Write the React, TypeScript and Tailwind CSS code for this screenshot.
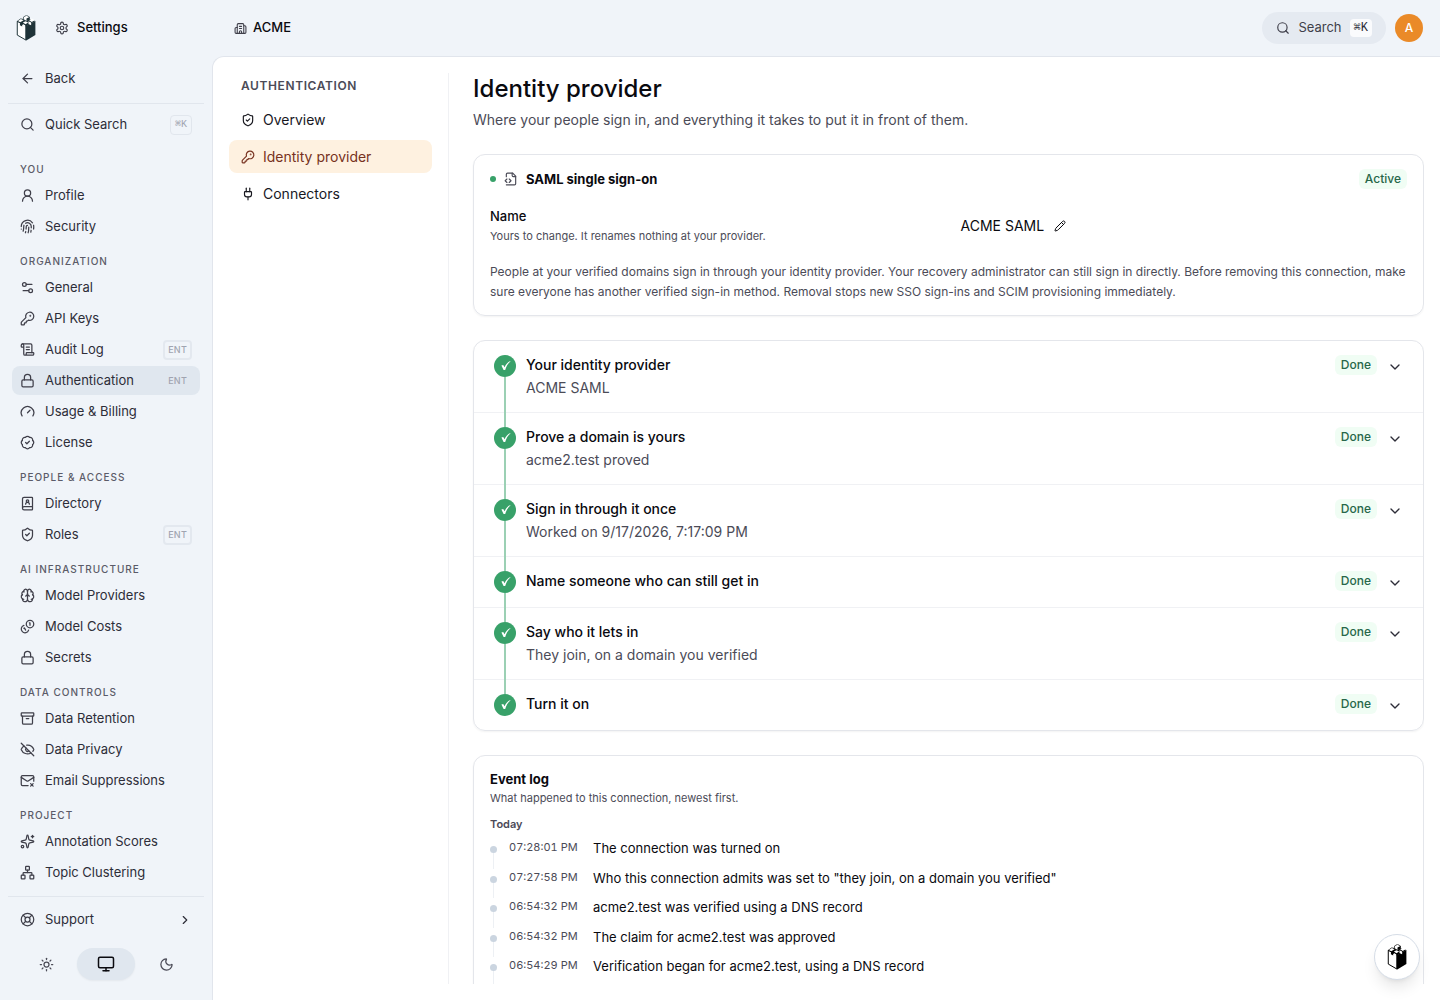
import { clsx } from "clsx";
import {
  Archive,
  ArrowLeft,
  BadgeCheck,
  BookUser,
  Brain,
  Building2,
  ChevronDown,
  ChevronRight,
  EyeOff,
  Fingerprint,
  Gauge,
  KeyRound,
  LifeBuoy,
  Lock,
  MailX,
  Monitor,
  Moon,
  Network,
  Pencil,
  Plug,
  ScrollText,
  Search,
  Settings2,
  ShieldCheck,
  Sparkles,
  Sun,
  UserRound,
} from "lucide-react";
import type { ComponentType, ReactNode } from "react";

interface IconProps {
  size?: number | string;
  className?: string;
}

interface NavItem {
  label: string;
  icon: ComponentType<IconProps>;
  ent?: boolean;
  active?: boolean;
}

interface NavSection {
  title: string;
  items: NavItem[];
}

interface Step {
  title: string;
  detail?: string;
}

function StrokeIcon({
  size = 24,
  className,
  children,
}: IconProps & { children: ReactNode }) {
  return (
    <svg
      width={size}
      height={size}
      viewBox="0 0 24 24"
      fill="none"
      stroke="currentColor"
      strokeWidth="2"
      strokeLinecap="round"
      strokeLinejoin="round"
      className={className}
      aria-hidden="true"
    >
      {children}
    </svg>
  );
}

function GearIcon(props: IconProps) {
  return (
    <StrokeIcon {...props}>
      <path d="M12.22 2h-.44a2 2 0 0 0-2 2v.18a2 2 0 0 1-1 1.73l-.43.25a2 2 0 0 1-2 0l-.15-.08a2 2 0 0 0-2.73.73l-.22.38a2 2 0 0 0 .73 2.73l.15.1a2 2 0 0 1 1 1.72v.51a2 2 0 0 1-1 1.74l-.15.09a2 2 0 0 0-.73 2.73l.22.38a2 2 0 0 0 2.73.73l.15-.08a2 2 0 0 1 2 0l.43.25a2 2 0 0 1 1 1.73V20a2 2 0 0 0 2 2h.44a2 2 0 0 0 2-2v-.18a2 2 0 0 1 1-1.73l.43-.25a2 2 0 0 1 2 0l.15.08a2 2 0 0 0 2.73-.73l.22-.39a2 2 0 0 0-.73-2.73l-.15-.08a2 2 0 0 1-1-1.74v-.5a2 2 0 0 1 1-1.74l.15-.09a2 2 0 0 0 .73-2.73l-.22-.38a2 2 0 0 0-2.73-.73l-.15.08a2 2 0 0 1-2 0l-.43-.25a2 2 0 0 1-1-1.73V4a2 2 0 0 0-2-2z" />
      <circle cx="12" cy="12" r="3" />
    </StrokeIcon>
  );
}

function CoinsIcon(props: IconProps) {
  return (
    <StrokeIcon {...props}>
      <path d="M13.744 17.736a6 6 0 1 1-7.48-7.48" />
      <path d="M15 6h1v4" />
      <path d="m6.134 14.768.866-.5 2 3.464" />
      <circle cx="16" cy="8" r="6" />
    </StrokeIcon>
  );
}

function FileCodeIcon(props: IconProps) {
  return (
    <StrokeIcon {...props}>
      <path d="M4 22h14a2 2 0 0 0 2-2V7l-5-5H6a2 2 0 0 0-2 2v4" />
      <path d="M14 2v4a2 2 0 0 0 2 2h4" />
      <path d="m5 12-3 3 3 3" />
      <path d="m9 18 3-3-3-3" />
    </StrokeIcon>
  );
}

const sections: NavSection[] = [
  {
    title: "You",
    items: [
      { label: "Profile", icon: UserRound },
      { label: "Security", icon: Fingerprint },
    ],
  },
  {
    title: "Organization",
    items: [
      { label: "General", icon: Settings2 },
      { label: "API Keys", icon: KeyRound },
      { label: "Audit Log", icon: ScrollText, ent: true },
      { label: "Authentication", icon: Lock, ent: true, active: true },
      { label: "Usage & Billing", icon: Gauge },
      { label: "License", icon: BadgeCheck },
    ],
  },
  {
    title: "People & Access",
    items: [
      { label: "Directory", icon: BookUser },
      { label: "Roles", icon: ShieldCheck, ent: true },
    ],
  },
  {
    title: "AI Infrastructure",
    items: [
      { label: "Model Providers", icon: Brain },
      { label: "Model Costs", icon: CoinsIcon },
      { label: "Secrets", icon: Lock },
    ],
  },
  {
    title: "Data Controls",
    items: [
      { label: "Data Retention", icon: Archive },
      { label: "Data Privacy", icon: EyeOff },
      { label: "Email Suppressions", icon: MailX },
    ],
  },
  {
    title: "Project",
    items: [
      { label: "Annotation Scores", icon: Sparkles },
      { label: "Topic Clustering", icon: Network },
    ],
  },
];

const authPages: NavItem[] = [
  { label: "Overview", icon: ShieldCheck },
  { label: "Identity provider", icon: KeyRound, active: true },
  { label: "Connectors", icon: Plug },
];

const steps: Step[] = [
  { title: "Your identity provider", detail: "ACME SAML" },
  { title: "Prove a domain is yours", detail: "acme2.test proved" },
  {
    title: "Sign in through it once",
    detail: "Worked on 9/17/2026, 7:17:09 PM",
  },
  { title: "Name someone who can still get in" },
  { title: "Say who it lets in", detail: "They join, on a domain you verified" },
  { title: "Turn it on" },
];

const events = [
  { time: "07:28:01 PM", text: "The connection was turned on" },
  {
    time: "07:27:58 PM",
    text: 'Who this connection admits was set to "they join, on a domain you verified"',
  },
  { time: "06:54:32 PM", text: "acme2.test was verified using a DNS record" },
  { time: "06:54:32 PM", text: "The claim for acme2.test was approved" },
  {
    time: "06:54:29 PM",
    text: "Verification began for acme2.test, using a DNS record",
  },
];

function Logo({ className }: { className?: string }) {
  return (
    <svg viewBox="0 0 57 79" className={className} aria-hidden="true">
      <path
        d="M2 19 L28 33 V76 L2 61 Z"
        fill="#fff"
        stroke="currentColor"
        strokeWidth="3"
        strokeLinejoin="round"
      />
      <path d="M28 34 L57 18 V61 L28 78 Z" fill="currentColor" />
      <path d="M1 19 L12 11 L22 12 L40 12 L57 18 L28 36 Z" fill="currentColor" />
      <path d="M4 18 L13 12 L21 16 L11 22 Z" fill="#fff" />
      <path
        d="M21 6 L30 1 L39 6 V14 L30 19 L21 14 Z"
        fill="#fff"
        stroke="currentColor"
        strokeWidth="2"
        strokeLinejoin="round"
      />
      <path d="M30 11 L39 6 V14 L30 19 Z" fill="currentColor" />
      <path d="M38 16 L46 11 L55 16 L46 21 Z" fill="#fff" />
      <path d="M36 19 L44 23 V31 L36 27 Z" fill="#fff" />
      <path d="M19 23 L27 19 L35 23 L27 28 Z" fill="#fff" />
      <path d="M10 23 L17 27 V35 L10 31 Z" fill="currentColor" />
      <path d="M19 27 L26 31 V36 L19 33 Z" fill="#fff" />
    </svg>
  );
}

function Header() {
  return (
    <header className="flex h-14 shrink-0 items-center pr-[17px]">
      <div className="flex w-[212px] shrink-0 items-center pl-4">
        <Logo className="h-[26px] w-5 text-[#1f3338]" />
        <h2 className="ml-[19px] flex items-center gap-2 text-[13px] font-medium">
          <GearIcon size={14} className="text-[#3f3f4a]" />
          Settings
        </h2>
      </div>
      <div className="flex flex-1 items-center gap-1.5 pl-[22px] text-[13px] font-medium">
        <Building2 size={13} className="text-[#3f3f4a]" />
        ACME
      </div>
      <button className="flex h-8 items-center gap-2 rounded-full bg-[#e5eaf1] px-3.5 text-[13px] text-[#3f3f4a]">
        <Search size={14} />
        Search
        <kbd className="rounded bg-[#fafbfd] px-1 font-['Liberation_Mono','DejaVu_Sans_Mono',monospace] text-xs leading-[18px] text-[#2b2b35]">
          ⌘K
        </kbd>
      </button>
      <button
        aria-label="Account"
        className="ml-[9px] size-7 rounded-full bg-[#ea8a28] text-xs font-medium text-white"
      >
        A
      </button>
    </header>
  );
}

function SidebarLink({ label, icon: Icon, ent, active }: NavItem) {
  return (
    <a
      href="#"
      className={clsx(
        "flex h-[29px] items-center gap-2.5 rounded-lg px-2 text-[13px] text-[#2d2d38]",
        active && "bg-[#e0e7ef]"
      )}
    >
      <Icon size={15} className="text-[#3f3f4a]" />
      <span className="flex-1">{label}</span>
      {ent && (
        <span
          className={clsx(
            "rounded border-2 px-[3px] text-[9px] leading-4 font-medium tracking-wide text-[#a0a4b0]",
            active ? "border-transparent" : "border-[#e3e8ef]"
          )}
        >
          ENT
        </span>
      )}
    </a>
  );
}

function Sidebar() {
  return (
    <aside className="flex w-[212px] shrink-0 flex-col">
      <div className="px-3 pt-2 pb-2.5">
        <SidebarLink label="Back" icon={ArrowLeft} />
      </div>
      <div className="mx-2 border-t border-[#e1e6ed]" />
      <div className="px-3 pt-1.5">
        <button className="flex h-[29px] w-full items-center gap-2.5 px-2 text-left text-[13px] text-[#2d2d38]">
          <Search size={15} className="text-[#3f3f4a]" />
          <span className="flex-1">Quick Search</span>
          <kbd className="rounded border border-[#e1e6ed] px-1 font-['Liberation_Mono','DejaVu_Sans_Mono',monospace] text-[10px] leading-[18px] text-[#a0a4b0]">
            ⌘K
          </kbd>
        </button>
      </div>
      <nav className="flex min-h-0 flex-1 flex-col gap-3 overflow-hidden px-3 pt-[22px]">
        {sections.map((section) => (
          <div key={section.title}>
            <h3 className="mb-1 px-2 text-[10px] leading-4 font-medium tracking-widest text-[#5b5b68] uppercase">
              {section.title}
            </h3>
            <div className="flex flex-col gap-0.5">
              {section.items.map((item) => (
                <SidebarLink key={item.label} {...item} />
              ))}
            </div>
          </div>
        ))}
      </nav>
      <div className="mx-2 border-t border-[#e1e6ed]" />
      <div className="px-3 pt-2 pb-5">
        <button className="flex h-[29px] w-full items-center gap-2.5 px-2 text-left text-[13px] text-[#2d2d38]">
          <LifeBuoy size={15} className="text-[#3f3f4a]" />
          <span className="flex-1">Support</span>
          <ChevronRight size={14} />
        </button>
        <div className="mt-3.5 flex justify-center gap-0.5 text-[#4b4b57]">
          <button
            aria-label="Light theme"
            className="flex h-8 w-[58px] items-center justify-center"
          >
            <Sun size={15} />
          </button>
          <button
            aria-label="System theme"
            className="flex h-8 w-[58px] items-center justify-center rounded-full bg-[#e0e7ef] text-[#0a0a0f] shadow-xs"
          >
            <Monitor size={18} />
          </button>
          <button
            aria-label="Dark theme"
            className="flex h-8 w-[58px] items-center justify-center"
          >
            <Moon size={15} />
          </button>
        </div>
      </div>
    </aside>
  );
}

function AuthNav() {
  return (
    <nav className="w-[220px] shrink-0 border-r border-[#f0f1f4] pr-4">
      <h3 className="mb-2 px-3 pt-1 text-xs leading-[18px] font-semibold tracking-wider text-[#4b4b57] uppercase">
        Authentication
      </h3>
      <div className="flex flex-col gap-1">
        {authPages.map(({ label, icon: Icon, active }) => (
          <a
            key={label}
            href="#"
            className={clsx(
              "flex h-[33px] items-center gap-2 rounded-lg px-3 text-sm",
              active ? "bg-[#fef1e0] text-[#773220]" : "text-[#18181f]"
            )}
          >
            <Icon size={14} />
            {label}
          </a>
        ))}
      </div>
    </nav>
  );
}

function Badge({ children }: { children: string }) {
  return (
    <span className="rounded-md bg-[#f0fdf4] px-1.5 text-xs leading-5 font-medium text-[#276749]">
      {children}
    </span>
  );
}

function ConnectionCard() {
  return (
    <section className="rounded-xl border border-[#e4e6eb] px-4 pt-3.5 pb-[13px] shadow-xs">
      <div className="flex items-center">
        <span className="size-1.5 rounded-full bg-[#38a169]" />
        <FileCodeIcon size={14} className="ml-2 text-[#4b4b57]" />
        <h2 className="ml-2 flex-1 text-[13px] leading-5 font-bold">
          SAML single sign-on
        </h2>
        <Badge>Active</Badge>
      </div>
      <div className="mt-[17px] grid grid-cols-2 items-center gap-6">
        <div>
          <p className="text-[13px] leading-[21px] font-medium">Name</p>
          <p className="text-[11px] leading-[19px] text-[#4b4b57]">
            Yours to change. It renames nothing at your provider.
          </p>
        </div>
        <div className="flex items-center gap-2.5 text-sm">
          ACME SAML
          <button aria-label="Rename">
            <Pencil size={12} />
          </button>
        </div>
      </div>
      <p className="mt-4 text-xs leading-5 text-[#4b4b57]">
        People at your verified domains sign in through your identity provider.
        Your recovery administrator can still sign in directly. Before removing
        this connection, make sure everyone has another verified sign-in method.
        Removal stops new SSO sign-ins and SCIM provisioning immediately.
      </p>
    </section>
  );
}

function StepRow({
  step,
  first,
  last,
}: {
  step: Step;
  first: boolean;
  last: boolean;
}) {
  return (
    <li className={clsx(!last && "border-b border-[#f0f1f4]")}>
      <button aria-expanded="false" className="flex w-full px-5 text-left">
        <span
          className={clsx(
            "flex w-[22px] shrink-0 flex-col items-center self-stretch",
            !last && "-mb-px"
          )}
        >
          <span className={clsx("h-3.5 w-0.5", !first && "bg-[#9bd0b4]")} />
          <svg viewBox="0 0 22 22" className="size-[22px]" aria-hidden="true">
            <circle cx="11" cy="11" r="11" fill="#38a169" />
            <path
              d="M7.4 10.6 L9.2 10 L10.6 12.2 C11.8 9.6 13.4 7.6 16.2 6 L16.4 6.5 C13.8 8.8 12.4 11.4 11.2 15 L9.6 15 Z"
              fill="#fff"
            />
          </svg>
          {!last && <span className="w-0.5 flex-1 bg-[#9bd0b4]" />}
        </span>
        <span className="ml-2.5 flex min-h-[50px] flex-1 flex-col gap-0.5 py-3.5 text-sm">
          <span className="leading-5 font-medium">{step.title}</span>
          {step.detail && (
            <span className="leading-[21px] text-[#4b4b57]">{step.detail}</span>
          )}
        </span>
        <span className="flex items-start gap-2.5 self-start pt-3.5">
          <Badge>Done</Badge>
          <ChevronDown size={16} className="mt-1 text-[#2d2d38]" />
        </span>
      </button>
    </li>
  );
}

function EventLog() {
  return (
    <section className="rounded-xl border border-[#e4e6eb] px-4 pt-[13px] pb-4 shadow-xs">
      <h2 className="text-[13px] leading-5 font-bold">Event log</h2>
      <p className="text-[11px] leading-[18px] text-[#4b4b57]">
        What happened to this connection, newest first.
      </p>
      <h3 className="mt-2 text-[11px] leading-[18px] font-semibold text-[#4b4b57]">
        Today
      </h3>
      <ol className="mt-1.5">
        {events.map((event, index) => (
          <li key={index} className="flex">
            <span className="flex w-[7px] flex-col items-center pt-[7px]">
              <span className="size-[7px] shrink-0 rounded-full bg-[#cbd5e0]" />
              <span className="w-px flex-1 bg-[#edf0f4]" />
            </span>
            <time className="ml-3 w-[72px] shrink-0 text-[11px] leading-4 text-[#4b4b57] tabular-nums">
              {event.time}
            </time>
            <p className="ml-3 pb-2.5 text-[13px] leading-normal">
              {event.text}
            </p>
          </li>
        ))}
      </ol>
    </section>
  );
}

export default function App() {
  return (
    <div className="flex h-screen flex-col overflow-hidden bg-[#f0f4f9] font-['Inter',sans-serif] text-[#0a0a0f]">
      <Header />
      <div className="flex min-h-0 flex-1">
        <Sidebar />
        <div className="flex min-w-0 flex-1 rounded-tl-xl border-t border-l border-[#e1e5ec] bg-white p-4">
          <AuthNav />
          <main className="flex min-w-0 flex-1 flex-col gap-6 overflow-hidden pl-6 *:shrink-0">
            <div>
              <h1 className="text-2xl leading-8 font-medium">
                Identity provider
              </h1>
              <p className="mt-1 text-sm leading-[21px] text-[#4b4b57]">
                Where your people sign in, and everything it takes to put it in
                front of them.
              </p>
            </div>
            <ConnectionCard />
            <ol className="rounded-xl border border-[#e4e6eb] shadow-xs">
              {steps.map((step, index) => (
                <StepRow
                  key={step.title}
                  step={step}
                  first={index === 0}
                  last={index === steps.length - 1}
                />
              ))}
            </ol>
            <EventLog />
          </main>
        </div>
      </div>
      <button
        aria-label="Open assistant"
        className="fixed right-5 bottom-5 flex size-[46px] items-center justify-center rounded-full border border-[#d5dce6] bg-white text-black shadow-lg"
      >
        <Logo className="h-[26px] w-5" />
      </button>
    </div>
  );
}
